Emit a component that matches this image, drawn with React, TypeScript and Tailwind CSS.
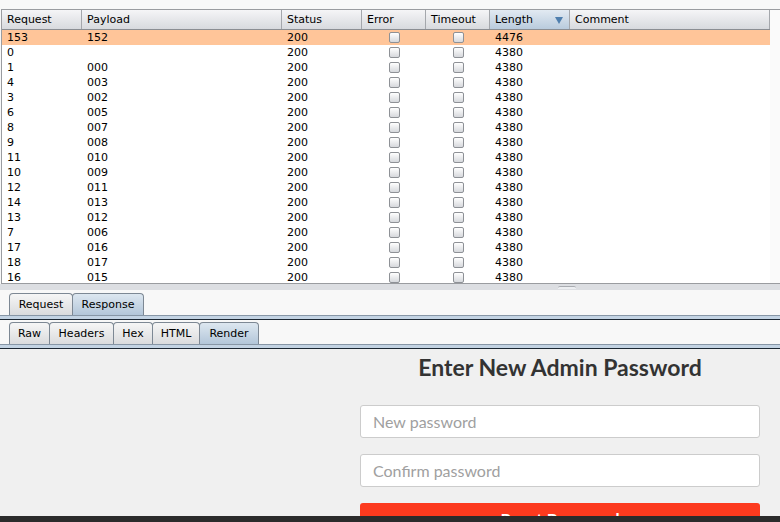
import React from 'react';

const columns = [
  { label: 'Request', w: 'w-[80px]' },
  { label: 'Payload', w: 'w-[200px]' },
  { label: 'Status', w: 'w-[80px]' },
  { label: 'Error', w: 'w-[64px]' },
  { label: 'Timeout', w: 'w-[64px]' },
  { label: 'Length', w: 'w-[80px]', sorted: true },
  { label: 'Comment', w: 'w-[200px]' },
];

const rows: [string, string, string][] = [
  ['153', '152', '4476'],
  ['0', '', '4380'],
  ['1', '000', '4380'],
  ['4', '003', '4380'],
  ['3', '002', '4380'],
  ['6', '005', '4380'],
  ['8', '007', '4380'],
  ['9', '008', '4380'],
  ['11', '010', '4380'],
  ['10', '009', '4380'],
  ['12', '011', '4380'],
  ['14', '013', '4380'],
  ['13', '012', '4380'],
  ['7', '006', '4380'],
  ['17', '016', '4380'],
  ['18', '017', '4380'],
  ['16', '015', '4380'],
];

const Checkbox = () => (
  <div className="w-[11px] h-[11px] rounded-[2px] border border-[#8e9196] bg-linear-to-b from-white to-[#d6d8dc]" />
);

const Tab = ({ label, w, active }: { label: string; w: string; active?: boolean }) => (
  <div
    className={`${w} h-full -ml-px first:ml-0 flex items-center justify-center pt-[2px] rounded-t-[4px] border border-b-0 border-[#7d8894] ${
      active ? 'bg-linear-to-b from-[#dde7f0] to-[#b3c6d9]' : 'bg-linear-to-b from-[#f6f6f6] to-[#dadbdd]'
    }`}
  >
    {label}
  </div>
);

const TabLine = () => (
  <div className="flex flex-col">
    <div className="h-px bg-[#8796a6]" />
    <div className="h-[3px] bg-[#c3d3e3]" />
    <div className="h-px bg-[#1c2733]" />
  </div>
);

export default function App() {
  return (
    <div className="w-[780px] h-[522px] overflow-hidden flex flex-col bg-[#f8f8f8] text-black text-[11px] font-['DejaVu_Sans',sans-serif]">
      <div className="h-[9px] shrink-0" />

      {/* results table */}
      <div className="h-[275px] shrink-0 ml-px border-t border-l border-b border-[#9a9ca0] flex flex-col bg-[#fafafa]">
        <div className="h-[20px] flex border-b border-[#8b8e93] w-[768px]">
          {columns.map((c) => (
            <div
              key={c.label}
              className={`${c.w} h-full flex items-center justify-between pl-[5px] pr-[4px] pt-px border-r border-[#a4a7ac] ${
                c.sorted ? 'bg-linear-to-b from-[#e2eaf2] to-[#b9cbdd]' : 'bg-linear-to-b from-[#f5f5f7] to-[#d8dade]'
              }`}
            >
              <span>{c.label}</span>
              {c.sorted && (
                <svg width="8" height="7" viewBox="0 0 8 7" className="mr-[2px]">
                  <polygon points="0,0 8,0 4,7" fill="#4f7fae" />
                </svg>
              )}
            </div>
          ))}
        </div>
        <div className="flex-1 overflow-hidden">
          {rows.map(([req, payload, len], i) => (
            <div
              key={req}
              className={`w-[768px] h-[15px] flex items-center leading-[15px] ${i === 0 ? 'bg-[#ffc599]' : 'bg-white'}`}
            >
              <div className="w-[80px] pl-[5px]">{req}</div>
              <div className="w-[200px] pl-[5px]">{payload}</div>
              <div className="w-[80px] pl-[5px]">200</div>
              <div className="w-[64px] flex justify-center">
                <Checkbox />
              </div>
              <div className="w-[64px] flex justify-center">
                <Checkbox />
              </div>
              <div className="w-[80px] pl-[5px]">{len}</div>
              <div className="w-[200px]" />
            </div>
          ))}
        </div>
      </div>

      {/* split divider */}
      <div className="h-[6px] shrink-0 bg-[#dcdee2] flex justify-center pl-[354px]">
        <div className="mt-[2px] w-[18px] h-[3px] rounded-t-[2px] border-t border-[#a9acb1] bg-[#eceef1]" />
      </div>

      {/* request / response tabs */}
      <div className="h-[3px] shrink-0" />
      <div className="h-[22px] shrink-0 flex pl-[9px]">
        <Tab label="Request" w="w-[64px]" />
        <Tab label="Response" w="w-[72px]" active />
      </div>
      <TabLine />
      <div className="h-[2px] shrink-0" />
      <div className="h-[22px] shrink-0 flex pl-[9px]">
        <Tab label="Raw" w="w-[41px]" />
        <Tab label="Headers" w="w-[65px]" />
        <Tab label="Hex" w="w-[40px]" />
        <Tab label="HTML" w="w-[48px]" />
        <Tab label="Render" w="w-[60px]" active />
      </div>
      <TabLine />

      {/* rendered page */}
      <div className="h-[167px] shrink-0 overflow-hidden bg-[#f0f0f0] font-['Lato',sans-serif]">
        <div className="ml-[360px] w-[400px] pt-[5px]">
          <h2 className="text-center text-[23px] leading-[26px] font-bold text-[#333333]">Enter New Admin Password</h2>
          <div className="mt-[25px] h-[33px] rounded-[3px] border border-[#cccccc] bg-white flex items-center pl-[12px] text-[16px] text-[#a0a0a0]">
            New password
          </div>
          <div className="mt-[16px] h-[33px] rounded-[3px] border border-[#cccccc] bg-white flex items-center pl-[12px] text-[16px] text-[#a0a0a0]">
            Confirm password
          </div>
          <div className="mt-[16px] h-[34px] rounded-t-[3px] bg-[#fc3a1e] flex items-center justify-center text-white text-[17px] font-bold">
            Reset Password
          </div>
        </div>
      </div>
      <div className="h-[6px] shrink-0 bg-[#2b2b2b]" />
    </div>
  );
}
